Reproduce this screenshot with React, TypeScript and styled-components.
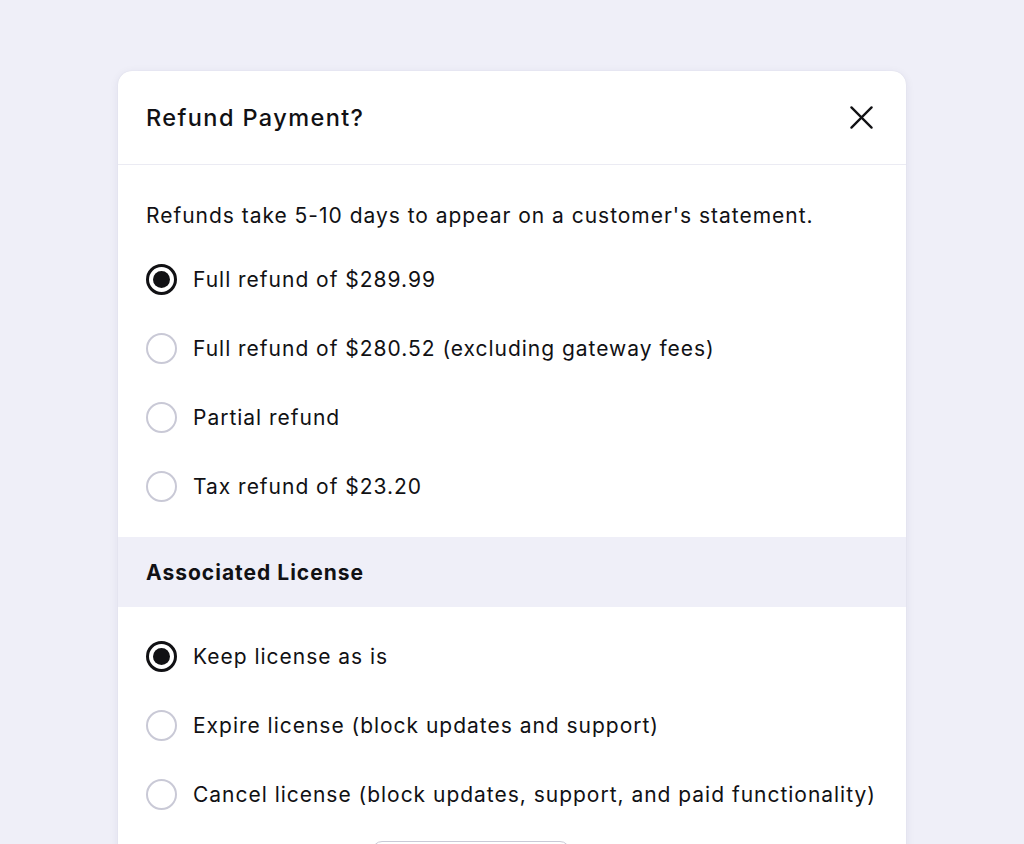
import React, { useState } from "react";
import styled, { createGlobalStyle } from "styled-components";

const Global = createGlobalStyle`
  html, body { margin: 0; padding: 0; background: #efeff8; }
  body { font-family: Inter, "Noto Sans", sans-serif; color: #111114; -webkit-font-smoothing: antialiased; }
  * { box-sizing: border-box; }
`;

const Page = styled.div`
  padding-top: 71px;
  display: flex;
  justify-content: center;
  overflow: hidden;
  height: 844px;
`;

const Modal = styled.div`
  width: 788px;
  background: #ffffff;
  border-radius: 14px;
  box-shadow: 0 2px 10px rgba(40, 40, 90, 0.08), 0 0 1px rgba(40, 40, 90, 0.12);
  align-self: flex-start;
`;

const Header = styled.div`
  height: 94px;
  padding: 0 28px;
  display: flex;
  align-items: center;
  justify-content: space-between;
  border-bottom: 1px solid #ebebf3;
`;

const Title = styled.h2`
  margin: 0;
  font-size: 23.5px;
  font-weight: 500;
  letter-spacing: 1.4px;
  color: #111114;
`;

const CloseButton = styled.button`
  border: none;
  background: none;
  padding: 0;
  width: 24px;
  height: 24px;
  display: flex;
  align-items: center;
  justify-content: center;
  cursor: pointer;
  color: #111114;
  margin-right: 5px;
`;

const Section = styled.div<{ $top: number; $bottom: number }>`
  padding: ${(p) => p.$top}px 28px ${(p) => p.$bottom}px;
`;

const Intro = styled.p`
  margin: 0 0 15px;
  font-size: 21px;
  line-height: 28px;
  letter-spacing: 0.98px;
  color: #111114;
  padding-top: 1px;
`;

const Band = styled.div`
  height: 70px;
  background: #efeff8;
  display: flex;
  align-items: center;
  padding: 0 28px;
  font-size: 21px;
  font-weight: 700;
  letter-spacing: 1px;
  color: #111114;
`;

const Row = styled.label`
  height: 69px;
  display: flex;
  align-items: center;
  gap: 16px;
  font-size: 21px;
  letter-spacing: 0.98px;
  cursor: pointer;
`;

const Circle = styled.span<{ $on: boolean }>`
  width: 31px;
  height: 31px;
  border-radius: 50%;
  flex: none;
  border: ${(p) => (p.$on ? "3.5px solid #111114" : "2.5px solid #c9c9d6")};
  display: flex;
  align-items: center;
  justify-content: center;
  &::after {
    content: "";
    width: 17px;
    height: 17px;
    border-radius: 50%;
    background: #111114;
    display: ${(p) => (p.$on ? "block" : "none")};
  }
`;

const Footer = styled.div`
  padding: 12px 28px 0 254px;
`;

const GhostButton = styled.button`
  width: 198px;
  height: 48px;
  border: 1.5px solid #c9c9d6;
  border-radius: 10px;
  background: #fff;
`;

type Opt = { id: string; label: string };

const refundOpts: Opt[] = [
  { id: "full", label: "Full refund of $289.99" },
  { id: "excl", label: "Full refund of $280.52 (excluding gateway fees)" },
  { id: "partial", label: "Partial refund" },
  { id: "tax", label: "Tax refund of $23.20" },
];

const licenseOpts: Opt[] = [
  { id: "keep", label: "Keep license as is" },
  { id: "expire", label: "Expire license (block updates and support)" },
  { id: "cancel", label: "Cancel license (block updates, support, and paid functionality)" },
];

function RadioGroup({ opts, value, onChange }: { opts: Opt[]; value: string; onChange: (v: string) => void }) {
  return (
    <div>
      {opts.map((o) => (
        <Row key={o.id} onClick={() => onChange(o.id)}>
          <Circle $on={value === o.id} />
          {o.label}
        </Row>
      ))}
    </div>
  );
}

export default function App() {
  const [refund, setRefund] = useState("full");
  const [license, setLicense] = useState("keep");
  return (
    <>
      <Global />
      <Page>
        <Modal>
          <Header>
            <Title>Refund Payment?</Title>
            <CloseButton aria-label="Close">
              <svg width="23" height="23" viewBox="0 0 24 24" fill="none" stroke="currentColor" strokeWidth="2.4" strokeLinecap="round">
                <path d="M1.5 1.5L22.5 22.5M22.5 1.5L1.5 22.5" />
              </svg>
            </CloseButton>
          </Header>
          <Section $top={36} $bottom={16}>
            <Intro>Refunds take 5-10 days to appear on a customer's statement.</Intro>
            <RadioGroup opts={refundOpts} value={refund} onChange={setRefund} />
          </Section>
          <Band>Associated License</Band>
          <Section $top={15} $bottom={0}>
            <RadioGroup opts={licenseOpts} value={license} onChange={setLicense} />
          </Section>
          <Footer>
            <GhostButton />
          </Footer>
        </Modal>
      </Page>
    </>
  );
}
